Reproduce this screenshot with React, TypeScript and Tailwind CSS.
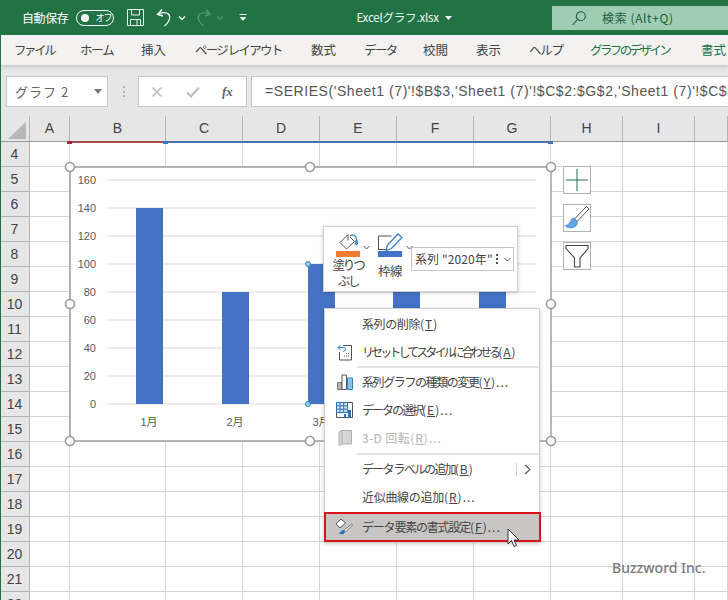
import type { ReactNode } from "react";

const jp = "font-['Noto_Sans_CJK_JP','Liberation_Sans',sans-serif]";

// column widths as measured off the sheet, the last one runs off the window
const columns = [
  { name: "A", cls: "w-[40px]" },
  { name: "B", cls: "w-[96px]" },
  { name: "C", cls: "w-[77px]" },
  { name: "D", cls: "w-[77px]" },
  { name: "E", cls: "w-[77px]" },
  { name: "F", cls: "w-[77px]" },
  { name: "G", cls: "w-[77px]" },
  { name: "H", cls: "w-[72px]" },
  { name: "I", cls: "w-[72px]" },
  { name: "", cls: "flex-1" },
];

const rows = [4, 5, 6, 7, 8, 9, 10, 11, 12, 13, 14, 15, 16, 17, 18, 19, 20, 21, 22];

const tabs = [
  { label: "ファイル", cls: "w-[80px] pl-[14px] tracking-[-2.4px]" },
  { label: "ホーム", cls: "w-[61px] tracking-[-1.2px]" },
  { label: "挿入", cls: "w-[54px]" },
  { label: "ページ レイアウト", cls: "w-[116px] tracking-[-1.8px]" },
  { label: "数式", cls: "w-[53px]" },
  { label: "データ", cls: "w-[59px] tracking-[-1.6px]" },
  { label: "校閲", cls: "w-[53px]" },
  { label: "表示", cls: "w-[53px]" },
  { label: "ヘルプ", cls: "w-[61px] tracking-[-1.2px]" },
  { label: "グラフのデザイン", cls: "w-[111px] tracking-[-2.6px] text-[#217346]" },
  { label: "書式", cls: "w-[30px] text-[#217346]" },
];

function TitleBar() {
  return (
    <div className={`flex h-[35px] items-center bg-[#217346] text-white ${jp}`}>
      <span className="ml-[22px] text-[12px] tracking-[-0.4px]">自動保存</span>
      <div className="ml-[8px] flex h-[16px] w-[38px] items-center rounded-full border border-white pl-[4px]">
        <span className="h-[8px] w-[8px] rounded-full bg-white" />
        <span className="ml-[6px] text-[9px] leading-none tracking-[-1px]">オフ</span>
      </div>
      <svg className="ml-[13px]" width="17" height="17" viewBox="0 0 17 17" fill="none" stroke="#e6f2ea" strokeWidth="1">
        <path d="M.5.500h16v16H.5z" />
        <path d="M4.500.5v5.500h8V.5M3.500 16.500v-6h10v6M10 10.500v6" />
      </svg>
      <svg className="ml-[11px]" width="20" height="20" viewBox="0 0 20 20" fill="none" stroke="#fff" strokeWidth="1.300">
        <path d="M7 1.500 2.500 6.500l5.500 1.500" />
        <path d="M3 6.500c3-2.500 8-2.500 10.500-.5 2.500 3 1 8-4 12" />
      </svg>
      <svg className="ml-[3px]" width="8" height="6" viewBox="0 0 8 6" fill="none" stroke="#fff" strokeWidth="1.200">
        <path d="M1 1.500 4 4.500 7 1.500" />
      </svg>
      <svg className="ml-[7px]" width="20" height="20" viewBox="0 0 20 20" fill="none" stroke="#4f9a72" strokeWidth="1.300">
        <path d="M13 1.500 17.500 6.500 12 8" />
        <path d="M17 6.500c-3-2.500-8-2.500-10.500-.5-2.500 3-1 8 4 12" />
      </svg>
      <svg className="ml-[3px]" width="8" height="6" viewBox="0 0 8 6" fill="none" stroke="#4f9a72" strokeWidth="1.200">
        <path d="M1 1.500 4 4.500 7 1.500" />
      </svg>
      <svg className="ml-[15px]" width="8" height="9" viewBox="0 0 8 9" fill="#e6f2ea">
        <path d="M0.500 1h7v1h-7zM0.500 4h7L4 8z" />
      </svg>
      <div className="ml-[109px] flex w-[100px] items-center text-[11.500px] text-[#f4f8f5]">
        <span className="whitespace-nowrap tracking-[-0.2px]">Excelグラフ.xlsx</span>
        <svg className="ml-[6px] shrink-0" width="7" height="4" viewBox="0 0 7 4" fill="#fff">
          <path d="M0 0h7L3.500 4z" />
        </svg>
      </div>
      <div className="ml-auto flex h-[24px] w-[176px] items-center bg-[#9fcdb3] text-[#1f5c3c]">
        <svg className="ml-[19px]" width="16" height="16" viewBox="0 0 16 16" fill="none" stroke="#1f5c3c" strokeWidth="1.100">
          <circle cx="9.800" cy="6.200" r="4.500" />
          <path d="M6.500 9.500 1.500 15" />
        </svg>
        <span className="ml-[15px] text-[12px] tracking-[0.6px]">検索 (Alt+Q)</span>
      </div>
    </div>
  );
}

function RibbonTabs() {
  return (
    <div className={`relative z-10 flex h-[30px] items-center whitespace-nowrap bg-[#f3f2f1] text-[12.500px] text-[#444] shadow-[0_2px_4px_rgba(0,0,0,0.12)] ${jp}`}>
      {tabs.map((t) => (
        <span key={t.label} className={`shrink-0 ${t.cls}`}>
          {t.label}
        </span>
      ))}
    </div>
  );
}

function FormulaBar() {
  return (
    <div className={`flex h-[51px] items-start bg-[#e6e6e6] pl-[6px] pt-[11px] ${jp}`}>
      <div className="flex h-[31px] w-[102px] items-center border border-[#c6c6c6] bg-white pl-[8px] text-[13px] tracking-[1px] text-[#666]">
        グラフ 2
        <svg className="ml-auto mr-[5px]" width="8" height="5" viewBox="0 0 8 5" fill="#777">
          <path d="M0 0h8L4 5z" />
        </svg>
      </div>
      <div className="ml-[15px] mt-[10px] flex h-[11px] w-[2px] flex-col justify-between">
        <span className="h-[2px] w-[2px] bg-[#b0b0b0]" />
        <span className="h-[2px] w-[2px] bg-[#b0b0b0]" />
        <span className="h-[2px] w-[2px] bg-[#b0b0b0]" />
      </div>
      <div className="ml-[13px] flex h-[31px] w-[109px] items-center border border-[#c6c6c6] bg-white">
        <svg className="ml-[12px]" width="12" height="12" viewBox="0 0 12 12" fill="none" stroke="#bdbdbd" strokeWidth="1.600">
          <path d="M1.500 1.500l9 9M10.500 1.500l-9 9" />
        </svg>
        <svg className="ml-[23px]" width="14" height="12" viewBox="0 0 14 12" fill="none" stroke="#bdbdbd" strokeWidth="2">
          <path d="M1 6.500 5 10.500 13 1.500" />
        </svg>
        <span className="ml-[22px] font-['Liberation_Serif',serif] text-[13px] font-bold italic leading-none text-[#666]">fx</span>
      </div>
      <div className="ml-[4px] flex h-[31px] min-w-0 flex-1 items-center overflow-hidden whitespace-nowrap border border-r-0 border-[#c6c6c6] bg-white pl-[13px] font-['Liberation_Sans',sans-serif] text-[14px] tracking-[0.56px] text-[#555]">
        =SERIES('Sheet1 (7)'!$B$3,'Sheet1 (7)'!$C$2:$G$2,'Sheet1 (7)'!$C$3:$G$3,1)
      </div>
    </div>
  );
}

function ColumnHeader() {
  return (
    <div className="flex h-[26px] border-b border-[#9c9c9c] bg-[#e6e6e6] font-['Liberation_Sans',sans-serif] text-[14px] text-[#444]">
      <div className="flex h-full w-[30px] shrink-0 items-end justify-end border-r border-[#b5b5b5] pb-[2px] pr-[3px]">
        <svg width="18" height="17" viewBox="0 0 18 17" fill="#b7b7b7">
          <path d="M18 0v17H0z" />
        </svg>
      </div>
      {columns.map((c) => (
        <div key={c.name} className={`flex h-full shrink-0 items-center justify-center border-r border-[#b5b5b5] ${c.cls}`}>
          {c.name}
        </div>
      ))}
    </div>
  );
}

function SheetGrid() {
  return (
    <div className="font-['Liberation_Sans',sans-serif]">
      {rows.map((r) => (
        <div key={r} className="flex h-[25px]">
          <div className="flex h-full w-[30px] shrink-0 items-center justify-center border-b border-r border-[#b5b5b5] bg-[#e6e6e6] text-[14px] text-[#444]">
            {r}
          </div>
          {columns.map((c) => (
            <div key={c.name} className={`h-full shrink-0 border-b border-r border-[#d4d4d4] bg-white ${c.cls}`} />
          ))}
        </div>
      ))}
    </div>
  );
}

function Chart() {
  const ticks = [0, 20, 40, 60, 80, 100, 120, 140, 160];
  const bars = [
    { x: 76, v: 140 },
    { x: 162, v: 80 },
    { x: 248, v: 100 },
    { x: 333, v: 100 },
    { x: 419, v: 100 },
  ];
  const handles = [
    [10, 10],
    [250, 10],
    [491, 10],
    [10, 147],
    [491, 147],
    [10, 284],
    [250, 284],
    [491, 284],
  ];
  const y = (v: number) => 247 - v * 1.4;
  return (
    <svg className="absolute left-[60px] top-[157px]" width="502" height="295" viewBox="0 0 502 295">
      <rect x="10" y="10" width="481" height="274" fill="#fff" stroke="#a0a0a0" strokeWidth="1.500" />
      {ticks.map((t) => (
        <g key={t}>
          <line x1="47" x2="476" y1={y(t)} y2={y(t)} stroke="#d9d9d9" />
          <text x="36" y={y(t) + 4} textAnchor="end" fontSize="11" fill="#595959" fontFamily="Liberation Sans">
            {t}
          </text>
        </g>
      ))}
      {bars.map((b) => (
        <rect key={b.x} x={b.x} y={y(b.v)} width="27" height={b.v * 1.4} fill="#4472c4" />
      ))}
      {["1月", "2月", "3月"].map((m, i) => (
        <text key={m} x={89 + i * 86} y="269" textAnchor="middle" fontSize="11" fill="#595959" fontFamily="Liberation Sans, Noto Sans CJK JP">
          {m}
        </text>
      ))}
      <circle cx="248" cy={y(100)} r="2.500" fill="#9ecae8" stroke="#2e86c1" />
      <circle cx="248" cy={y(0)} r="2.500" fill="#9ecae8" stroke="#2e86c1" />
      {handles.map(([cx, cy]) => (
        <circle key={`${cx}-${cy}`} cx={cx} cy={cy} r="4.500" fill="#fff" stroke="#9a9a9a" strokeWidth="1.600" />
      ))}
    </svg>
  );
}

function SideButton({ children, cls }: { children: ReactNode; cls: string }) {
  return (
    <div className={`flex h-[28px] w-[28px] items-center justify-center border border-[#b0b0b0] bg-white ${cls}`}>
      {children}
    </div>
  );
}

function ChartButtons() {
  return (
    <div className="absolute left-[563px] top-[166px] flex flex-col">
      <SideButton cls="">
        <svg width="24" height="24" viewBox="0 0 24 24" stroke="#217346" strokeWidth="1">
          <path d="M12 1v22M1 12h22" />
        </svg>
      </SideButton>
      <SideButton cls="mt-[10px]">
        <svg width="26" height="26" viewBox="0 0 26 26">
          <path d="M22.500 1.500 10.500 14l2.500 2.500L25 4z" fill="#fff" stroke="#555" strokeWidth="1" />
          <path d="M10 13c-3 0-3 3-4.500 5C4.500 19.500 2.500 20.500 1 20.500c2 3 8 3.500 11 .5 1.500-1.500 1.500-3.500 1-5z" fill="#62a5e8" stroke="#3b7fc4" strokeWidth=".6" />
        </svg>
      </SideButton>
      <SideButton cls="mt-[10px]">
        <svg width="24" height="24" viewBox="0 0 24 24" fill="none" stroke="#444" strokeWidth="1.100">
          <path d="M1 1.500h22v3L15 14v9H9.500v-9L1 4.500z" />
        </svg>
      </SideButton>
    </div>
  );
}

function Chevron({ cls }: { cls: string }) {
  return (
    <svg className={cls} width="7" height="5" viewBox="0 0 7 5" fill="none" stroke="#555">
      <path d="M.5 1 3.500 4l3-3" />
    </svg>
  );
}

function MiniToolbar() {
  return (
    <div className={`absolute left-[323px] top-[226px] flex h-[66px] w-[195px] border border-[#d0d0d0] bg-white text-[12.500px] text-[#444] shadow-[0_1px_4px_rgba(0,0,0,0.2)] ${jp}`}>
      <div className="ml-[8px] flex w-[32px] flex-col items-center pt-[6px]">
        <svg width="24" height="18" viewBox="0 0 24 18" fill="none" stroke="#555" strokeWidth="1">
          <path d="M12 1.500 4 9.500l6.500 6.500 8-7.500-4.500-4.500" />
          <path d="M12 1.500v6" />
          <path d="M14 3c3-2 6-1 6.500 3" stroke="#3b8fd0" strokeWidth="1.300" />
          <path d="M20.500 6c1.500 3 1.500 6 0 6-1.500 0-1.500-3 0-6z" fill="#3b8fd0" stroke="#3b8fd0" />
        </svg>
        <div className="h-[6px] w-[24px] bg-[#ed7d31]" />
        <span className="whitespace-nowrap text-center leading-[16px] tracking-[-2.2px]">
          塗りつ
          <br />
          ぶし
        </span>
      </div>
      <Chevron cls="ml-[-1px] mt-[18px]" />
      <div className="ml-[7px] flex w-[26px] flex-col items-center pt-[6px]">
        <svg width="26" height="18" viewBox="0 0 26 18" fill="none">
          <path d="M1.500 17V3h13M1.500 16.500h10" stroke="#555" strokeWidth="1" />
          <path d="M21 1l4 3.500L14.500 15.500l-5.500 2 1.500-5.500z" fill="#fff" stroke="#3b7fc4" strokeWidth="1.300" />
        </svg>
        <div className="h-[6px] w-[24px] bg-[#4472c4]" />
        <span className="mt-[6px] whitespace-nowrap leading-[16px] tracking-[-0.5px]">枠線</span>
      </div>
      <Chevron cls="ml-[3px] mt-[18px]" />
      <div className="ml-[-2px] mt-[20px] flex h-[24px] w-[103px] items-center border border-[#c6c6c6] pl-[3px] text-[12px]">
        <span className="w-[81px] whitespace-nowrap tracking-[0.1px]">系列 "2020年"</span>
        <span className="flex h-[10px] flex-col justify-between">
          <span className="h-[2px] w-[2px] bg-[#555]" />
          <span className="h-[2px] w-[2px] bg-[#555]" />
          <span className="h-[2px] w-[2px] bg-[#555]" />
        </span>
        <Chevron cls="ml-[6px]" />
      </div>
    </div>
  );
}

// menu caption: the words are squeezed like Meiryo UI, the access key is not
function Caption({ text, hot, tail = "", cls }: { text: string; hot: string; tail?: string; cls: string }) {
  return (
    <span className="whitespace-pre">
      <span className={cls}>{text}</span>
      <span className="tracking-[1px]">
        (<u>{hot}</u>){tail}
      </span>
    </span>
  );
}

function MenuItem({ icon, label, cls = "", children }: { icon?: ReactNode; label: ReactNode; cls?: string; children?: ReactNode }) {
  return (
    <div className={`flex h-[28px] items-center ${cls}`}>
      <div className="flex w-[37px] shrink-0 justify-center pl-[2px]">{icon}</div>
      {label}
      {children}
    </div>
  );
}

function Separator() {
  return <div className="ml-[32px] h-[2px] bg-[#e3e3e3]" />;
}

function ContextMenu() {
  return (
    <div className={`absolute left-[324px] top-[308px] h-[235px] w-[216px] border border-[#d0d0d0] bg-white pt-[1px] text-[12px] text-[#444] shadow-[0_1px_4px_rgba(0,0,0,0.2)] ${jp}`}>
      <MenuItem label={<Caption text="系列の削除" hot="T" cls="tracking-[-0.4px]" />} />
      <MenuItem
        label={<Caption text="リセットしてスタイルに合わせる" hot="A" cls="tracking-[-2.900px]" />}
        icon={
          <svg width="16" height="18" viewBox="0 0 16 18" fill="none" stroke="#555" strokeWidth="1">
            <path d="M6 2.500h8.500v14.500h-12v-8" />
            <path d="M1 4.500h6c2 0 2 4-1 4M3.500 2 1 4.500 3.500 7" stroke="#2e86c1" />
            <path d="M7 13h5M9 10.500h3" strokeDasharray="1 1" />
          </svg>
        }
      />
      <Separator />
      <MenuItem
        label={<Caption text="系列グラフの種類の変更" hot="Y" tail="..." cls="tracking-[-1.400px]" />}
        icon={
          <svg width="16" height="16" viewBox="0 0 16 16">
            <path d="M.5 8.500h4.500V15.500H.5z" fill="#b5b5b5" stroke="#777" />
            <path d="M5 1h4.500v14.500H5z" fill="#fff" stroke="#555" />
            <path d="M10.500 4h5v11.500h-5z" fill="#8cc0e8" stroke="#2e86c1" />
          </svg>
        }
      />
      <MenuItem
        label={<Caption text="データの選択" hot="E" tail="..." cls="tracking-[-2px]" />}
        icon={
          <svg width="17" height="16" viewBox="0 0 17 16" fill="none">
            <path d="M.5.500h16v15H.5z" fill="#fff" stroke="#555" />
            <path d="M.5.500h11v10H.5z" fill="#cfe2f3" stroke="#2e75b6" />
            <path d="M.5 3.800h11M.5 7.200h11M4 .5v10M7.700.5v10" stroke="#2e75b6" />
            <path d="M12 8h3v7.500h-3zM8 12h2v3.500H8z" fill="#2e75b6" />
          </svg>
        }
      />
      <MenuItem
        cls="text-[#b4b4b4]"
        label={<Caption text="3-D 回転" hot="R" tail="..." cls="tracking-[0.4px]" />}
        icon={
          <svg width="14" height="16" viewBox="0 0 14 16">
            <path d="M1 2 4 .5h9.500V14H4L1 15.500z" fill="#d6d6d6" stroke="#b0b0b0" />
            <path d="M4 .5V14" stroke="#b0b0b0" />
          </svg>
        }
      />
      <div className="mt-[1px]">
        <Separator />
      </div>
      <MenuItem label={<Caption text="データ ラベルの追加" hot="B" cls="tracking-[-1.800px]" />}>
        <div className="ml-auto mr-[8px] flex h-[13px] items-center border-l border-[#d0d0d0] pl-[7px]">
          <svg width="7" height="11" viewBox="0 0 7 11" fill="none" stroke="#555" strokeWidth="1.100">
            <path d="M1 1l5 4.500L1 10" />
          </svg>
        </div>
      </MenuItem>
      <MenuItem label={<Caption text="近似曲線の追加" hot="R" tail="..." cls="tracking-[-0.3px]" />} />
      <div className="absolute bottom-[0px] left-[-1px] right-[-2px] flex h-[30px] items-center border-2 border-[#d9141c] bg-[#c8c6c4]">
        <div className="flex w-[36px] shrink-0 justify-center">
          <svg width="18" height="18" viewBox="0 0 18 18" fill="none">
            <path d="M6 1 1 6l4 4 5.500-5z" fill="#fff" stroke="#555" />
            <path d="M16.500 6 9 12.500l1.500 1.500L17.500 7z" fill="#fff" stroke="#555" strokeWidth=".8" />
            <path d="M8.500 12c-2 0-2.500 2.500-5 3.500 2.500 1.500 6.500 1 6.500-2z" fill="#2e75b6" />
          </svg>
        </div>
        <Caption text="データ要素の書式設定" hot="F" tail="..." cls="tracking-[-1.200px]" />
      </div>
    </div>
  );
}

function Cursor() {
  return (
    <svg className="absolute left-[507px] top-[528px]" width="13" height="20" viewBox="0 0 13 20">
      <path d="M1 1v15l3.500-3.500L7 18.500l2.500-1L7 12h5z" fill="#fff" stroke="#333" strokeWidth="1" />
    </svg>
  );
}

export default function App() {
  return (
    <div className="relative h-[600px] w-[728px] overflow-hidden bg-white">
      <TitleBar />
      <RibbonTabs />
      <FormulaBar />
      <ColumnHeader />
      <SheetGrid />

      {/* window edge */}
      <div className="absolute bottom-0 left-0 top-[35px] z-20 w-[1px] bg-[#217346]" />

      {/* series range markers along the column header */}
      <div className="absolute left-[70px] top-[141px] h-[2px] w-[96px] bg-[#a94a52]" />
      <div className="absolute left-[166px] top-[141px] h-[2px] w-[385px] bg-[#4a72b0]" />
      <div className="absolute left-[67px] top-[141px] h-[3px] w-[5px] bg-[#a52a3a]" />
      <div className="absolute left-[163px] top-[141px] h-[3px] w-[5px] bg-[#3b78c4]" />
      <div className="absolute left-[548px] top-[141px] h-[3px] w-[5px] bg-[#3b78c4]" />

      <Chart />
      <ChartButtons />
      <MiniToolbar />
      <ContextMenu />
      <Cursor />
      <span className="absolute left-[612px] top-[557px] font-['Noto_Sans',sans-serif] text-[14px] font-medium text-[#7a7a7a]">Buzzword Inc.</span>
    </div>
  );
}
